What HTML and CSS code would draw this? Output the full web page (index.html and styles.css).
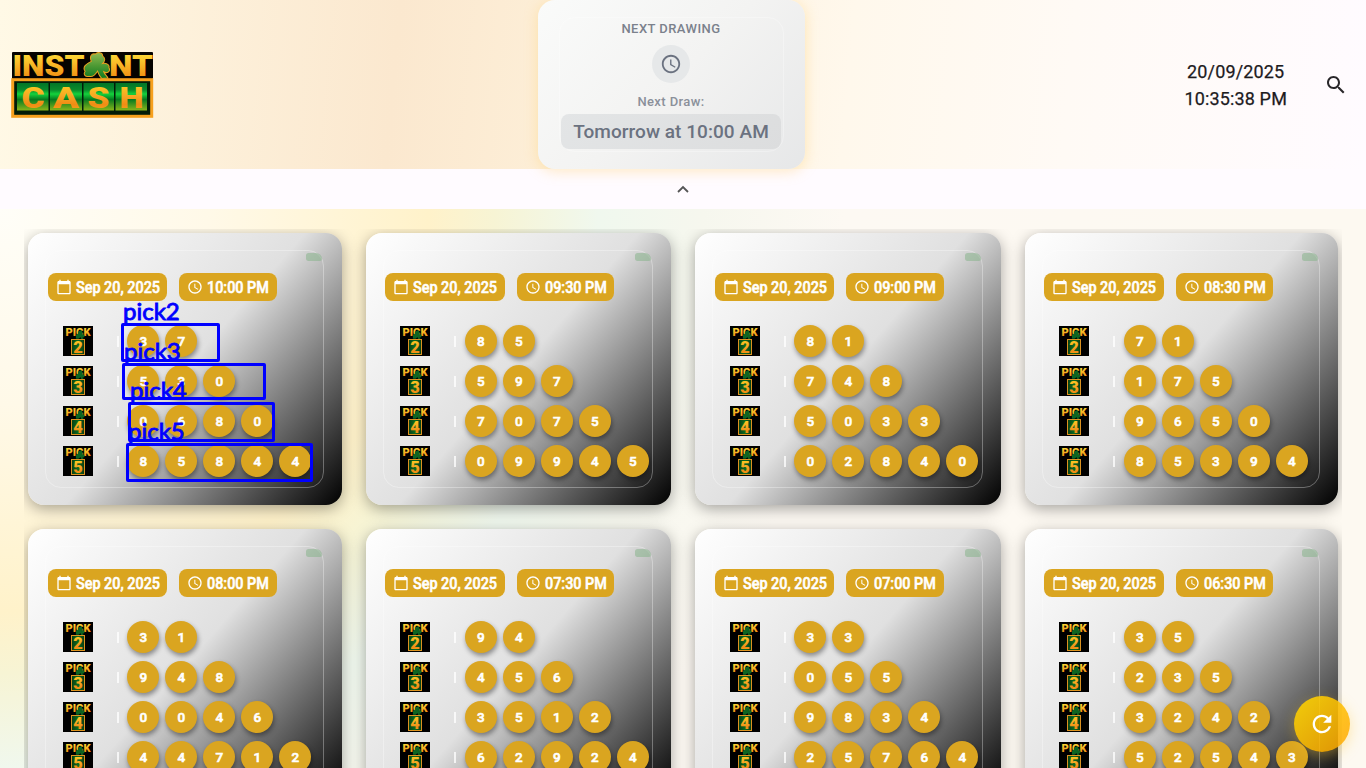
FILE: index.html
```html
<!DOCTYPE html>
<html lang="en">
<head>
<meta charset="utf-8">
<title>Instant Cash</title>
<link rel="stylesheet" href="styles.css">
</head>
<body>
<svg class="defs" width="0" height="0">
  <defs>
    <linearGradient id="gold" x1="0" y1="0" x2="0" y2="1"><stop offset="0.1" stop-color="#ffe03a"/><stop offset=".9" stop-color="#f08a10"/></linearGradient>
    <linearGradient id="orange" x1="0" y1="0" x2="0" y2="1"><stop offset="0" stop-color="#ffd820"/><stop offset=".45" stop-color="#f7a823"/><stop offset=".7" stop-color="#f08c14"/><stop offset="1" stop-color="#f8b01c"/></linearGradient>
    <linearGradient id="green" x1="0" y1="0" x2="0" y2="1"><stop offset="0" stop-color="#027526"/><stop offset=".25" stop-color="#0a8a2c"/><stop offset=".4" stop-color="#14d23c"/><stop offset=".6" stop-color="#077a20"/><stop offset="1" stop-color="#8ab51a"/></linearGradient>
    <linearGradient id="leaf" x1="0" y1="0" x2="0" y2="1"><stop offset="0" stop-color="#8fba52"/><stop offset=".5" stop-color="#4e9a34"/><stop offset="1" stop-color="#0f7a20"/></linearGradient>
    <linearGradient id="tile" x1="0" y1="0" x2="1" y2="0"><stop offset="0" stop-color="#0a3d12"/><stop offset=".5" stop-color="#0b6a20"/><stop offset="1" stop-color="#0a3d12"/></linearGradient>
    <symbol id="calendar" viewBox="0 0 24 24"><path d="M20 3h-1V1h-2v2H7V1H5v2H4c-1.100 0-2 .9-2 2v16c0 1.100.9 2 2 2h16c1.100 0 2-.9 2-2V5c0-1.100-.9-2-2-2zm0 18H4V8h16v13z"/></symbol>
    <symbol id="clock" viewBox="0 0 24 24"><path d="M11.990 2C6.470 2 2 6.480 2 12s4.470 10 9.990 10C17.520 22 22 17.520 22 12S17.520 2 11.990 2zM12 20c-4.420 0-8-3.580-8-8s3.580-8 8-8 8 3.580 8 8-3.580 8-8 8zm.5-13H11v6l5.250 3.150.75-1.230-4.500-2.670z"/></symbol>
    <symbol id="search" viewBox="0 0 24 24"><path d="M15.500 14h-.79l-.28-.27C15.410 12.590 16 11.110 16 9.500 16 5.910 13.090 3 9.500 3S3 5.910 3 9.500 5.910 16 9.500 16c1.610 0 3.090-.59 4.230-1.570l.27.28v.79l5 4.990L20.490 19l-4.990-5zm-6 0C7.010 14 5 11.990 5 9.500S7.010 5 9.500 5 14 7.010 14 9.500 11.990 14 9.500 14z"/></symbol>
    <symbol id="refresh" viewBox="0 0 24 24"><path d="M17.650 6.350C16.200 4.900 14.210 4 12 4c-4.420 0-7.990 3.580-7.990 8s3.570 8 7.990 8c3.730 0 6.840-2.550 7.730-6h-2.080c-.82 2.330-3.040 4-5.650 4-3.310 0-6-2.690-6-6s2.690-6 6-6c1.660 0 3.140.69 4.220 1.780L13 11h7V4l-2.350 2.350z"/></symbol>
    <symbol id="shamrock" viewBox="0 0 28 26"><path d="M9 9C7 4 9 1 13 2c2-2.500 7-1.500 7 2 3 2 2 5 0 7 3-.5 7 1 6 4 2 4-2 6-5 4 1 3 3 4 4 6l-6 .5c-2-2-3-4-4-7-2 3-5 6-8 5-4 1-6-2-4-5-3-4 1-7 6-9.500z"/></symbol>
  </defs>
</svg>

<header class="top">
  <svg class="logo" viewBox="0 0 143 66" role="img" aria-label="Instant Cash">
    <rect x="1" y="0" width="141" height="27" rx="1" fill="#050300"/>
    <g class="logo-word" fill="url(#gold)">
      <text x="1.500" y="23.500" textLength="72" lengthAdjust="spacingAndGlyphs">INST</text>
      <text x="98" y="23.500" textLength="44" lengthAdjust="spacingAndGlyphs">NT</text>
    </g>
    <rect x="1.700" y="27.700" width="139" height="36.600" fill="#021c08" stroke="#f6a01e" stroke-width="3"/>
    <rect x="6" y="31" width="31.500" height="27.500" fill="url(#green)"/>
    <rect x="39" y="31" width="32" height="27.500" fill="url(#green)"/>
    <rect x="72.500" y="31" width="30.500" height="27.500" fill="url(#green)"/>
    <rect x="104.500" y="31" width="31.500" height="27.500" fill="url(#green)"/>
    <g class="logo-cash" fill="url(#orange)">
      <text x="10.500" y="55.500" textLength="23" lengthAdjust="spacingAndGlyphs">C</text>
      <text x="42" y="55.500" textLength="26" lengthAdjust="spacingAndGlyphs">A</text>
      <text x="76.500" y="55.500" textLength="22" lengthAdjust="spacingAndGlyphs">S</text>
      <text x="108.500" y="55.500" textLength="24" lengthAdjust="spacingAndGlyphs">H</text>
    </g>
    <use href="#shamrock" x="71" y="0" width="29" height="27" fill="url(#leaf)" stroke="#e8a020" stroke-width="1"/>
  </svg>
  <section class="next">
    <div class="next-frame">
      <h1 class="next-title">NEXT DRAWING</h1>
      <div class="next-icon"><svg class="icon-clock"><use href="#clock"/></svg></div>
      <p class="next-label">Next Draw:</p>
      <p class="next-time">Tomorrow at 10:00 AM</p>
    </div>
  </section>
  <div class="tools">
    <div class="now"><span>20/09/2025</span><span>10:35:38 PM</span></div>
    <svg class="icon-search"><use href="#search"/></svg>
  </div>
</header>
<div class="collapse"><svg class="icon-up" viewBox="0 0 12 8"><path d="M1 7l5-5 5 5"/></svg></div>

<main class="board"><div class="grid" id="grid"></div></main>

<div class="mark mark2"><span>pick2</span></div>
<div class="mark mark3"><span>pick3</span></div>
<div class="mark mark4"><span>pick4</span></div>
<div class="mark mark5"><span>pick5</span></div>
<button class="refresh" aria-label="Refresh"><svg class="icon-refresh"><use href="#refresh"/></svg></button>
<script src="app.js"></script>
</body>
</html>
```
FILE: styles.css
```css
* { box-sizing: border-box; }
body { margin: 0; height: 768px; overflow: hidden; display: flex; flex-direction: column; position: relative; background: #fffbff; font-family: Roboto, sans-serif; }
.defs { position: absolute; }
.top { height: 169px; flex: none; display: grid; grid-template-columns: 537.500px 267.500px 1fr; align-items: center; background: linear-gradient(95deg, #fff9e6 0%, #fbe8cf 29%, #fdefd8 42%, #fff8ec 62%, #fffaf5 78%, #fffbff 100%); }
.logo { width: 143px; height: 66px; margin-left: 11px; overflow: visible; }
.logo-word text { font: 900 29px Roboto, sans-serif; }
.logo-cash text { font: 900 29px Roboto, sans-serif; }
.next { height: 169px; border-radius: 17px; padding: 17px 21px; background: linear-gradient(135deg, #fafbfa, #f3f3f2 50%, #e6e7e8); box-shadow: 0 2px 14px rgba(255, 205, 100, .4); }
.next-frame { height: 135px; width: 225px; display: flex; flex-direction: column; align-items: center; border: 1px solid rgba(255, 255, 255, .3); border-radius: 16px; }
.next-title { margin: 3px 0 0; font-size: 13px; line-height: 16px; font-weight: 500; letter-spacing: .45px; color: #7b818c; }
.next-icon { margin-top: 8px; width: 38px; height: 38px; border-radius: 50%; background: #e6e8e9; display: grid; place-items: center; }
.icon-clock { width: 22px; height: 22px; fill: #6b7280; }
.next-label { margin: 10px 0 0; font-size: 13px; line-height: 17px; font-weight: 500; letter-spacing: .4px; color: #8b909a; }
.next-time { margin: 4px 0 0; width: 220px; height: 35px; line-height: 35px; text-align: center; font-size: 19px; font-weight: 500; letter-spacing: .05px; color: #6b7280; background: linear-gradient(135deg, #e3e5e6, #dcddde); border-radius: 8px; }
.tools { display: flex; justify-content: flex-end; align-items: center; padding-right: 18px; gap: 37px; }
.now { display: flex; flex-direction: column; align-items: center; font-size: 18px; line-height: 27px; letter-spacing: .15px; color: #1d1b1e; -webkit-text-stroke: .25px #1d1b1e; }
.icon-search { width: 24px; height: 24px; fill: #29272a; }
.collapse { height: 40px; flex: none; display: grid; place-items: center; }
.icon-up { width: 12px; height: 8px; fill: none; stroke: #555; stroke-width: 1.800; }
.board { flex: 1; min-height: 0; padding: 20px 24px 0; background: radial-gradient(1300px 1220px at 0 0, #fffef8 0%, #fff9e8 16%, #fff2ca 33%, #f7f4d4 38%, #f0f8ee 46%, #f6f7ee 54%, #fdf9f3 65%, #fdf9f1 100%); }
.grid { height: 539px; overflow: hidden; padding-top: 4px; display: grid; grid-template-columns: repeat(4, 329.500px); grid-auto-rows: 272px; row-gap: 24px; }
.card { margin: 0 12px; padding: 17px 18px; border-radius: 16px; background: linear-gradient(131.500deg, #fff, #e0e0e0 50%, #000); box-shadow: 0 4px 15px rgba(0, 0, 0, .34); position: relative; }
.card:nth-child(4n+1) { margin-left: 4px; }
.card:nth-child(4n) { margin-right: 4px; }
.frame { height: 238px; margin-left: -1px; border: 1px solid rgba(255, 255, 255, .32); border-radius: 16px; padding: 22px 0 0 1.500px; }
.badge { position: absolute; top: 20px; right: 20px; width: 16px; height: 8px; border-radius: 4px 9px 3px 4px; background: rgba(129, 178, 134, .5); }
.when { display: flex; gap: 12px; margin-bottom: 20px; }
.pill { height: 28px; padding: 0 8px; border-radius: 8px; background: #daa520; color: #fff; display: flex; align-items: center; gap: 4px; font-size: 16px; font-weight: 500; -webkit-text-stroke: .55px #fff; white-space: nowrap; }
.pill span { transform: scaleX(.9); transform-origin: left; }
.date { width: 119.500px; }
.time { width: 97.500px; }
.pill svg { width: 16px; height: 16px; fill: #fff; flex: none; -webkit-text-stroke: 0; }
.row { height: 40px; display: flex; align-items: center; padding-left: 15px; }
.pick { width: 30px; height: 30px; flex: none; }
.pick text { font: 900 11px Roboto, sans-serif; }
.pick .n { font: 900 16.500px Roboto, sans-serif; }
.sep { width: 2px; height: 11px; margin: 0 8.800px 0 24px; background: rgba(255, 255, 255, .75); flex: none; }
.balls { display: flex; gap: 6px; }
.ball { width: 32px; height: 32px; border-radius: 50%; background: #daa520; color: #fff; font-size: 13.500px; font-weight: 500; -webkit-text-stroke: .6px #fff; display: grid; place-items: center; box-shadow: 1px 3px 5px rgba(0, 0, 0, .4); }
.mark { position: absolute; border: 3px solid #00f; border-radius: 2px; }
.mark span { position: absolute; left: -1px; top: -27px; font: 400 24px/24px Lato, sans-serif; color: #00f; -webkit-text-stroke: .9px #00f; }
.mark2 { left: 121px; top: 323px; width: 99px; height: 39px; }
.mark3 { left: 122px; top: 363px; width: 144px; height: 37px; }
.mark4 { left: 128px; top: 402px; width: 147px; height: 40px; }
.mark5 { left: 126px; top: 443px; width: 187px; height: 39px; }
.refresh { position: absolute; left: 1294px; top: 696px; width: 56px; height: 56px; border: 0; padding: 0; border-radius: 50%; background: linear-gradient(135deg, rgba(255, 215, 0, .9), rgba(255, 165, 0, .85)); box-shadow: 0 4px 14px rgba(255, 200, 40, .35); display: grid; place-items: center; }
.icon-refresh { width: 28px; height: 28px; fill: #fff; }
```
FILE: app.js
```js
const draws = [
  ['10:00 PM', '37', '530', '0680', '85844'],
  ['09:30 PM', '85', '597', '7075', '09945'],
  ['09:00 PM', '81', '748', '5033', '02840'],
  ['08:30 PM', '71', '175', '9650', '85394'],
  ['08:00 PM', '31', '948', '0046', '44712'],
  ['07:30 PM', '94', '456', '3512', '62924'],
  ['07:00 PM', '33', '055', '9834', '25764'],
  ['06:30 PM', '35', '235', '3242', '52543']
];

const pick = n => `<svg class="pick" viewBox="0 0 30 30"><rect width="30" height="30"/>
  <text x="2.500" y="9.500" textLength="25" lengthAdjust="spacingAndGlyphs" fill="url(#gold)">PICK</text>
  <use href="#shamrock" x="12" y="4" width="10" height="10" fill="#0d6422"/>
  <rect x="8.500" y="13.500" width="13" height="15" fill="url(#tile)" stroke="#dc9220"/>
  <text class="n" x="15" y="27" text-anchor="middle" fill="url(#orange)">${n}</text></svg>`;

document.getElementById('grid').innerHTML = draws.map(([time, ...picks]) => `
  <article class="card"><i class="badge"></i><div class="frame">
    <div class="when">
      <div class="pill date"><svg><use href="#calendar"/></svg><span>Sep 20, 2025</span></div>
      <div class="pill time"><svg><use href="#clock"/></svg><span>${time}</span></div>
    </div>
    ${picks.map((p, i) => `<div class="row">${pick(i + 2)}<i class="sep"></i><div class="balls">${[...p].map(d => `<b class="ball">${d}</b>`).join('')}</div></div>`).join('')}
  </div></article>`).join('');
```
